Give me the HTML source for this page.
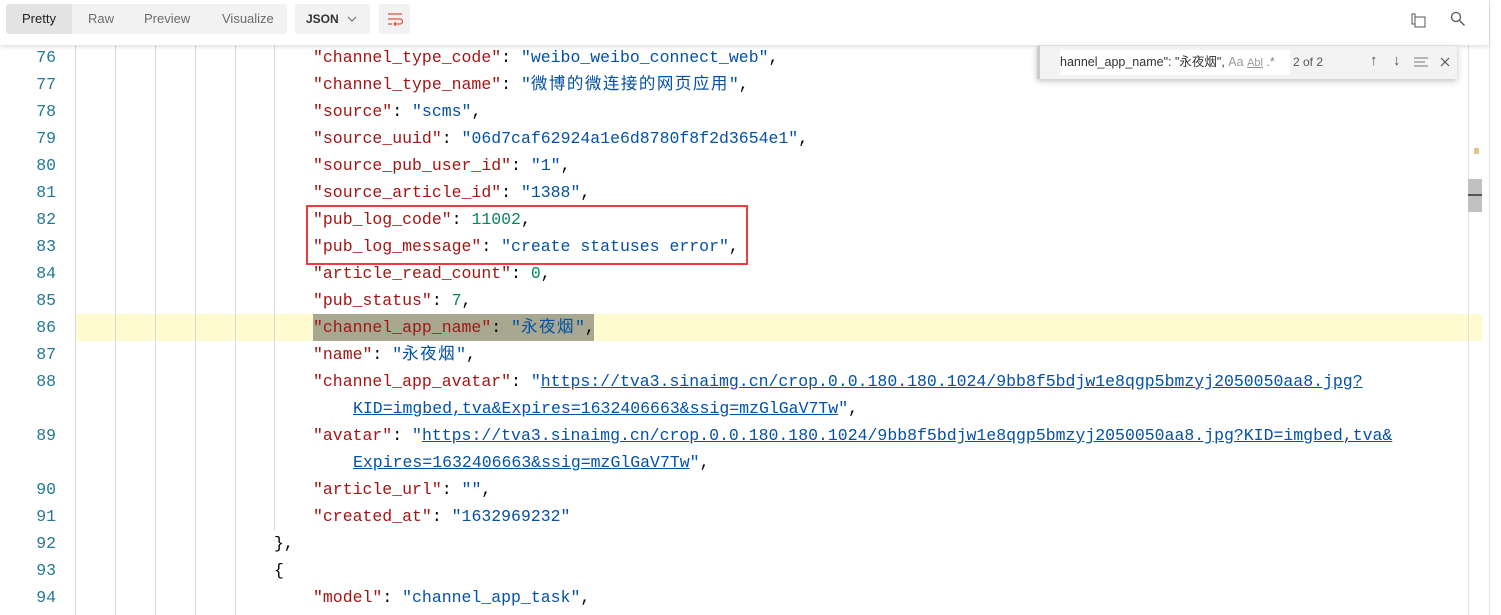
<!DOCTYPE html>
<html><head><meta charset="utf-8"><style>
body{margin:0;width:1501px;height:615px;overflow:hidden;background:#fff;position:relative;font-family:"Liberation Sans",sans-serif}
.tb{position:absolute;left:0;top:0;width:1489px;height:45px;background:#fff;box-shadow:0 2px 4px rgba(0,0,0,.12);z-index:5}
.tabs{position:absolute;left:6px;top:4px;width:281px;height:30px;background:#f2f2f2;border-radius:3px}
.tab{position:absolute;top:0;height:30px;line-height:30px;font-size:13px;color:#6b6b6b}
.btn{position:absolute;top:4px;height:30px;background:#f2f2f2;border-radius:3px}
.ln{position:absolute;left:0;width:56px;text-align:right;font-family:"Liberation Mono",monospace;font-size:16.5px;color:#237893;height:27px;line-height:27px}
.c{position:absolute;white-space:pre;font-family:"Liberation Mono","Noto Sans CJK SC",monospace;font-size:16.5px;height:27px;line-height:27px;color:#000}
.k{color:#a31515}.s{color:#0451a5}.n{color:#098658}.u{color:#0451a5;text-decoration:underline}
.cj{letter-spacing:1.5px}
.g{position:absolute;top:44px;width:1px;height:571px;background:#d9d9d9}
</style></head><body>
<div class="tb">
 <div class="tabs">
  <div style="position:absolute;left:0;top:0;width:66px;height:30px;background:#e3e3e3;border-radius:3px 0 0 3px"></div>
  <div class="tab" style="left:16px;color:#222">Pretty</div>
  <div class="tab" style="left:82px">Raw</div>
  <div class="tab" style="left:138px">Preview</div>
  <div class="tab" style="left:216px">Visualize</div>
 </div>
 <div class="btn" style="left:295px;width:75px"><span style="position:absolute;left:11px;top:8px;font-size:12px;font-weight:bold;color:#333">JSON</span><svg style="position:absolute;left:52px;top:12px" width="10" height="6"><path d="M1 1l4 4 4-4" stroke="#666" fill="none"/></svg></div>
 <div class="btn" style="left:379px;width:31px"><svg style="position:absolute;left:8px;top:9px" width="16" height="13"><path d="M1 1h14M1 6h12a2.5 2.5 0 010 5H8M1 11h4M9 9l-2 2 2 2" stroke="#e0533b" fill="none" stroke-width="1.2"/></svg></div>
 <svg style="position:absolute;left:1410px;top:12px" width="16" height="16"><path d="M4 4V1h-3v10h3" stroke="#555" fill="none" transform="translate(1,1)"/><rect x="5" y="5" width="10" height="10" stroke="#555" fill="none"/></svg>
 <svg style="position:absolute;left:1450px;top:11px" width="16" height="16"><circle cx="6" cy="6" r="4.5" stroke="#555" fill="none" stroke-width="1.3"/><path d="M9.5 9.5l5 5" stroke="#555" stroke-width="1.3"/></svg>
</div>
<div style="position:absolute;left:75px;top:314px;width:1407px;height:27px;background:#fffbd0"></div>
<div style="position:absolute;left:313px;top:314px;width:281px;height:27px;background:#a8a890"></div>
<div class="g" style="left:75px"></div><div class="g" style="left:115px"></div><div class="g" style="left:155px"></div><div class="g" style="left:195px"></div><div class="g" style="left:235px"></div><div class="g" style="left:274px;height:486px"></div>
<div class="ln" style="top:44px">76</div><div class="c" style="left:313px;top:44px"><span class="k">"channel_type_code"</span>: <span class="s">"weibo_weibo_connect_web"</span>,</div>
<div class="ln" style="top:71px">77</div><div class="c" style="left:313px;top:71px"><span class="k">"channel_type_name"</span>: <span class="s">"<span class="cj">微博的微连接的网页应用</span>"</span>,</div>
<div class="ln" style="top:98px">78</div><div class="c" style="left:313px;top:98px"><span class="k">"source"</span>: <span class="s">"scms"</span>,</div>
<div class="ln" style="top:125px">79</div><div class="c" style="left:313px;top:125px"><span class="k">"source_uuid"</span>: <span class="s">"06d7caf62924a1e6d8780f8f2d3654e1"</span>,</div>
<div class="ln" style="top:152px">80</div><div class="c" style="left:313px;top:152px"><span class="k">"source_pub_user_id"</span>: <span class="s">"1"</span>,</div>
<div class="ln" style="top:179px">81</div><div class="c" style="left:313px;top:179px"><span class="k">"source_article_id"</span>: <span class="s">"1388"</span>,</div>
<div class="ln" style="top:206px">82</div><div class="c" style="left:313px;top:206px"><span class="k">"pub_log_code"</span>: <span class="n">11002</span>,</div>
<div class="ln" style="top:233px">83</div><div class="c" style="left:313px;top:233px"><span class="k">"pub_log_message"</span>: <span class="s">"create statuses error"</span>,</div>
<div class="ln" style="top:260px">84</div><div class="c" style="left:313px;top:260px"><span class="k">"article_read_count"</span>: <span class="n">0</span>,</div>
<div class="ln" style="top:287px">85</div><div class="c" style="left:313px;top:287px"><span class="k">"pub_status"</span>: <span class="n">7</span>,</div>
<div class="ln" style="top:314px">86</div><div class="c" style="left:313px;top:314px"><span class="k">"channel_app_name"</span>: <span class="s">"<span class="cj">永夜烟</span>"</span>,</div>
<div class="ln" style="top:341px">87</div><div class="c" style="left:313px;top:341px"><span class="k">"name"</span>: <span class="s">"<span class="cj">永夜烟</span>"</span>,</div>
<div class="ln" style="top:368px">88</div><div class="c" style="left:313px;top:368px"><span class="k">"channel_app_avatar"</span>: <span class="s">"</span><span class="u">https://tva3.sinaimg.cn/crop.0.0.180.180.1024/9bb8f5bdjw1e8qgp5bmzyj2050050aa8.jpg?</span></div>
<div class="c" style="left:353px;top:395px"><span class="u">KID=imgbed,tva&amp;Expires=1632406663&amp;ssig=mzGlGaV7Tw</span><span class="s">"</span>,</div>
<div class="ln" style="top:422px">89</div><div class="c" style="left:313px;top:422px"><span class="k">"avatar"</span>: <span class="s">"</span><span class="u">https://tva3.sinaimg.cn/crop.0.0.180.180.1024/9bb8f5bdjw1e8qgp5bmzyj2050050aa8.jpg?KID=imgbed,tva&amp;</span></div>
<div class="c" style="left:353px;top:449px"><span class="u">Expires=1632406663&amp;ssig=mzGlGaV7Tw</span><span class="s">"</span>,</div>
<div class="ln" style="top:476px">90</div><div class="c" style="left:313px;top:476px"><span class="k">"article_url"</span>: <span class="s">""</span>,</div>
<div class="ln" style="top:503px">91</div><div class="c" style="left:313px;top:503px"><span class="k">"created_at"</span>: <span class="s">"1632969232"</span></div>
<div class="ln" style="top:530px">92</div><div class="c" style="left:274px;top:530px">},</div>
<div class="ln" style="top:557px">93</div><div class="c" style="left:274px;top:557px">{</div>
<div class="ln" style="top:584px">94</div><div class="c" style="left:313px;top:584px"><span class="k">"model"</span>: <span class="s">"channel_app_task"</span>,</div>
<div style="position:absolute;left:306px;top:205px;width:438px;height:56px;border:2px solid #f03c3c"></div>
<div style="position:absolute;left:1037px;top:46px;width:417px;height:33px;background:#f3f3f3;box-shadow:0 2px 6px rgba(0,0,0,.25);border-left:3px solid #ccc;z-index:6">
 <div style="position:absolute;left:20px;top:4px;width:230px;height:25px;background:#fff;overflow:hidden;font-size:12.5px;line-height:25px;color:#333;white-space:nowrap;font-family:'Liberation Sans','Noto Sans CJK SC',sans-serif">hannel_app_name": "永夜烟", <span style="color:#999">Aa</span> <span style="color:#999;text-decoration:underline;font-size:11px">Abl</span> <span style="color:#888">.*</span></div>
 <span style="position:absolute;left:253px;top:9px;font-size:12px;color:#555">2 of 2</span>
 <span style="position:absolute;left:330px;top:6px;font-size:15px;color:#555">↑</span>
 <span style="position:absolute;left:353px;top:6px;font-size:15px;color:#555">↓</span>
 <svg style="position:absolute;left:374px;top:11px" width="15" height="10"><path d="M0 1h14M0 5h11M0 9h14" stroke="#777"/></svg>
 <svg style="position:absolute;left:400px;top:11px" width="10" height="10"><path d="M1 1l8 8M9 1l-8 8" stroke="#555" stroke-width="1.2"/></svg>
</div>
<div style="position:absolute;left:1468px;top:44px;width:1px;height:571px;background:#e3e3e3"></div>
<div style="position:absolute;left:1489px;top:0;width:1px;height:615px;background:#e3e3e3"></div>
<div style="position:absolute;left:1474px;top:148px;width:5px;height:6px;background:#e5c48c"></div>
<div style="position:absolute;left:1468px;top:179px;width:14px;height:33px;background:#c1c1c1"></div>
<div style="position:absolute;left:1468px;top:194px;width:14px;height:2px;background:#555"></div>
</body></html>
